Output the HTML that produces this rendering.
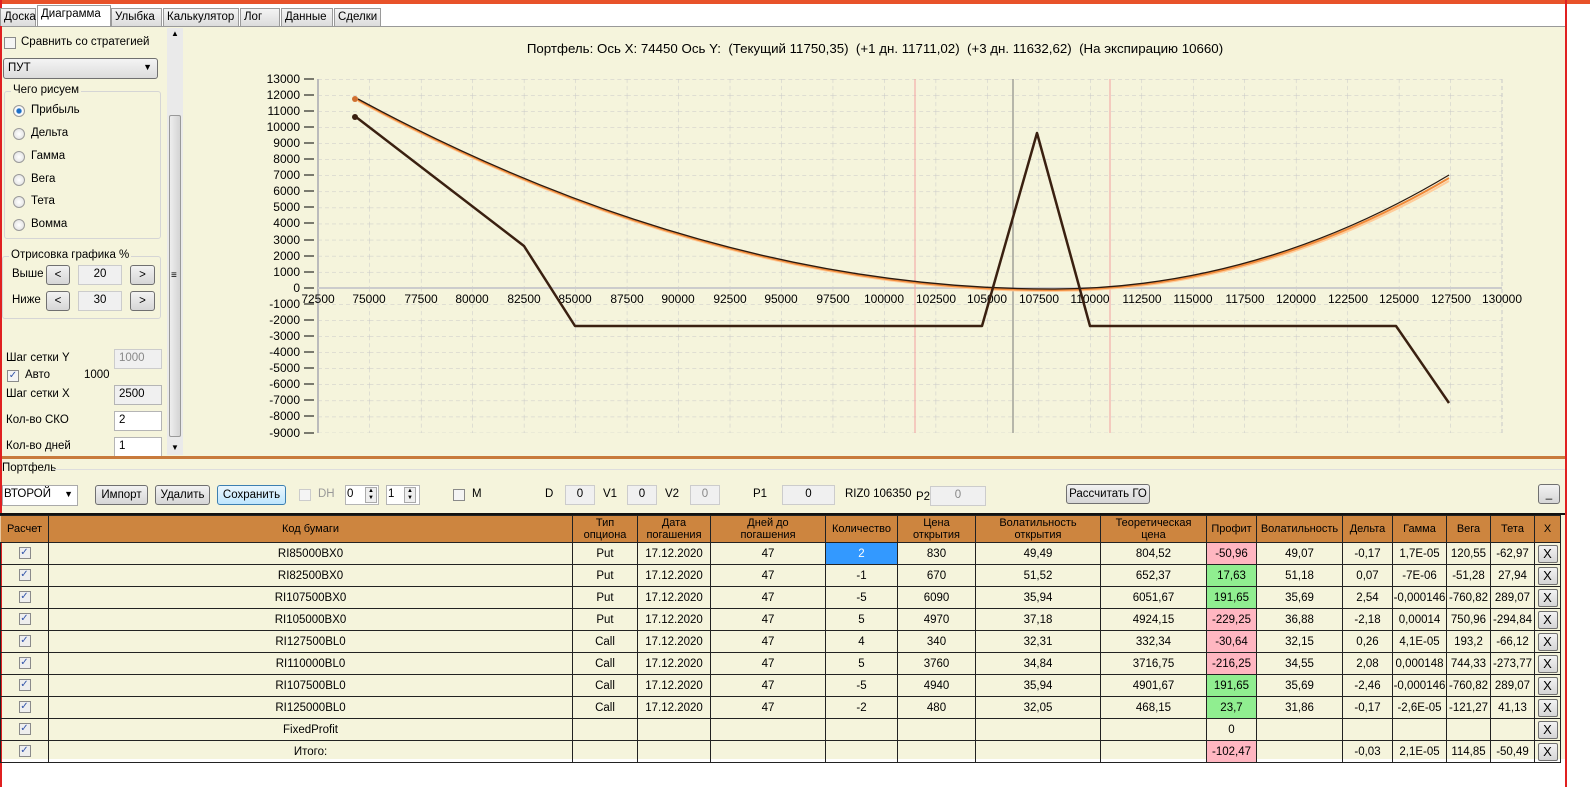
<!DOCTYPE html><html><head><meta charset="utf-8"><style>
*{box-sizing:border-box}
body{margin:0;width:1590px;height:787px;overflow:hidden;background:#fff;font-family:"Liberation Sans",sans-serif;font-size:11.5px;color:#000;position:relative}
.a{position:absolute}
.bg{background:#f5f4dc}
.tab{position:absolute;top:8px;height:18px;border:1px solid #9a9a9a;border-bottom:none;background:linear-gradient(#f4f4f4,#dcdcdc);font-size:11.5px;padding:2px 3px 0}
.btn{position:absolute;height:20px;border:1px solid #707070;border-radius:3px;background:linear-gradient(#f2f2f2,#d6d6d6);font-size:11.5px;text-align:center;line-height:18px}
.inp{position:absolute;height:20px;border:1px solid #b5b5b5;background:#fff;font-size:11.5px;padding:2px 4px}
.dis{background:#f0f0f0;color:#888;border-color:#ccc}
.rad{position:absolute;width:12px;height:12px;border-radius:50%;border:1px solid #9a9a9a;background:radial-gradient(#fff,#ddd)}
.cb{position:absolute;width:12px;height:12px;border:1px solid #8a8a8a;background:#f4f4f4;font-size:10px;line-height:10px;text-align:center;color:#3355aa}
.grp{position:absolute;border:1px solid #d5d5d5;border-radius:3px}
.gl{position:absolute;top:-8px;left:6px;background:#f5f4dc;padding:0 2px}
table{border-collapse:collapse;position:absolute;left:0;top:515px;table-layout:fixed}
td{border:1px solid #222;height:22px;text-align:center;font-size:11.5px;padding:0;white-space:nowrap;overflow:hidden}
th{background:#cd853f;border:1px solid #222;border-left:1px solid #e8c8a0;font-weight:normal;font-size:11px;height:27px;line-height:12px;padding:0}
.r{background:#ffb6c1}.g{background:#90ee90}
.xb{display:inline-block;width:20px;height:18px;border:1px solid #707070;border-radius:2px;background:linear-gradient(#f2f2f2,#d6d6d6);line-height:16px;font-size:13px}
.ck{display:inline-block;width:12px;height:12px;border:1px solid #8a8a8a;background:#eee;font-size:10px;line-height:10px;color:#3355aa;vertical-align:middle}
</style></head><body>
<div class="a" style="left:0;top:0;width:1590px;height:4px;background:#e8522a"></div>
<div class="a" style="left:0;top:4px;width:1590px;height:22px;background:#fff"></div>
<div class="a" style="left:0;top:0;width:2px;height:787px;background:#e02020"></div>
<div class="a" style="left:1565px;top:0;width:2px;height:787px;background:#e02020"></div>
<div class="tab" style="left:0;width:36px">Доска</div>
<div class="tab" style="left:37px;top:5px;height:22px;width:74px;background:#fff">Диаграмма</div>
<div class="tab" style="left:111px;width:51px">Улыбка</div>
<div class="tab" style="left:163px;width:76px">Калькулятор</div>
<div class="tab" style="left:240px;width:40px">Лог</div>
<div class="tab" style="left:281px;width:52px">Данные</div>
<div class="tab" style="left:334px;width:47px">Сделки</div>
<div class="a bg" style="left:2px;top:26px;width:1563px;height:430px;border-top:1px solid #999"></div>
<div class="cb" style="left:4px;top:37px"></div><div class="a" style="left:21px;top:36px">Сравнить со стратегией</div>
<div class="a" style="left:3px;top:58px;width:155px;height:21px;border:1px solid #707070;border-radius:3px;background:linear-gradient(#f4f4f4,#dcdcdc);padding:3px 4px">ПУТ<span style="position:absolute;right:5px;top:3px;font-size:9px">▼</span></div>
<div class="grp" style="left:4px;top:91px;width:157px;height:148px"><span class="gl">Чего рисуем</span></div>
<div class="rad" style="left:13px;top:105px;background:radial-gradient(#1b6fc7 30%,#fff 45%,#ddd)"></div><div class="a" style="left:31px;top:104px">Прибыль</div>
<div class="rad" style="left:13px;top:128px"></div><div class="a" style="left:31px;top:127px">Дельта</div>
<div class="rad" style="left:13px;top:151px"></div><div class="a" style="left:31px;top:150px">Гамма</div>
<div class="rad" style="left:13px;top:174px"></div><div class="a" style="left:31px;top:173px">Вега</div>
<div class="rad" style="left:13px;top:196px"></div><div class="a" style="left:31px;top:195px">Тета</div>
<div class="rad" style="left:13px;top:219px"></div><div class="a" style="left:31px;top:218px">Вомма</div>
<div class="grp" style="left:2px;top:256px;width:159px;height:63px"><span class="gl">Отрисовка графика %</span></div>
<div class="a" style="left:12px;top:268px">Выше</div><div class="btn" style="left:46px;top:265px;width:24px">&lt;</div><div class="inp dis" style="left:78px;top:265px;width:44px;text-align:center;color:#000">20</div><div class="btn" style="left:130px;top:265px;width:25px">&gt;</div>
<div class="a" style="left:12px;top:294px">Ниже</div><div class="btn" style="left:46px;top:291px;width:24px">&lt;</div><div class="inp dis" style="left:78px;top:291px;width:44px;text-align:center;color:#000">30</div><div class="btn" style="left:130px;top:291px;width:25px">&gt;</div>
<div class="a" style="left:6px;top:352px">Шаг сетки Y</div><div class="inp dis" style="left:114px;top:349px;width:48px">1000</div>
<div class="cb" style="left:7px;top:370px">✓</div><div class="a" style="left:25px;top:369px">Авто</div><div class="a" style="left:84px;top:369px">1000</div>
<div class="a" style="left:6px;top:388px">Шаг сетки X</div><div class="inp" style="left:114px;top:385px;width:48px;background:#f0f0f0">2500</div>
<div class="a" style="left:6px;top:414px">Кол-во СКО</div><div class="inp" style="left:114px;top:411px;width:48px">2</div>
<div class="a" style="left:6px;top:440px">Кол-во дней</div><div class="inp" style="left:114px;top:437px;width:48px">1</div>
<div class="a" style="left:167px;top:28px;width:16px;height:427px;background:#eaeaea"></div>
<div class="a" style="left:169px;top:115px;width:12px;height:322px;border:1px solid #999;border-radius:2px;background:linear-gradient(90deg,#eee,#d4d4d4)"></div>
<div class="a" style="left:171px;top:29px;font-size:8px">▲</div><div class="a" style="left:171px;top:443px;font-size:8px">▼</div>
<div class="a" style="left:171px;top:270px;font-size:10px">≡</div>
<div class="a" style="left:184px;top:41px;width:1382px;text-align:center;font-size:13.3px">Портфель: Ось X: 74450 Ось Y:&nbsp; (Текущий 11750,35)&nbsp; (+1 дн. 11711,02)&nbsp; (+3 дн. 11632,62)&nbsp; (На экспирацию 10660)</div>
<svg class="a" style="left:0;top:0" width="1590" height="460" font-family="Liberation Sans" font-size="12">
<defs><pattern id="gp" x="318" y="79" width="51.47" height="16.08" patternUnits="userSpaceOnUse"><path d="M0 0H51.47M0 0V16.08" stroke="#c8c8c8" stroke-dasharray="4 3" fill="none"/></pattern></defs>
<rect x="318" y="79" width="1184" height="354" fill="url(#gp)"/>
<line x1="1502" y1="79" x2="1502" y2="433" stroke="#c8c8c8" stroke-dasharray="4 3"/>
<line x1="318" y1="79" x2="318" y2="433" stroke="#bbb" stroke-width="2"/>
<line x1="318" y1="288" x2="1502" y2="288" stroke="#ccc" stroke-width="2"/>
<line x1="915" y1="79" x2="915" y2="433" stroke="#f4a0a0"/>
<line x1="1110" y1="79" x2="1110" y2="433" stroke="#f4a0a0"/>
<line x1="1013" y1="79" x2="1013" y2="433" stroke="#777"/>
<g text-anchor="end" fill="#000">
<text x="300" y="83">13000</text><text x="300" y="99">12000</text><text x="300" y="115">11000</text><text x="300" y="131">10000</text><text x="300" y="147">9000</text><text x="300" y="163">8000</text><text x="300" y="179">7000</text><text x="300" y="195">6000</text><text x="300" y="211">5000</text><text x="300" y="227">4000</text><text x="300" y="244">3000</text><text x="300" y="260">2000</text><text x="300" y="276">1000</text><text x="300" y="292">0</text><text x="300" y="308">-1000</text><text x="300" y="324">-2000</text><text x="300" y="340">-3000</text><text x="300" y="356">-4000</text><text x="300" y="372">-5000</text><text x="300" y="388">-6000</text><text x="300" y="404">-7000</text><text x="300" y="420">-8000</text><text x="300" y="437">-9000</text>
</g>
<path d="M304 79h10M304 95h10M304 111h10M304 127h10M304 143h10M304 159h10M304 175h10M304 191h10M304 207h10M304 223h10M304 240h10M304 256h10M304 272h10M304 288h10M304 304h10M304 320h10M304 336h10M304 352h10M304 368h10M304 384h10M304 400h10M304 416h10M304 433h10" stroke="#000"/>
<g text-anchor="middle" fill="#000">
<text x="318" y="303">72500</text><text x="369" y="303">75000</text><text x="421" y="303">77500</text><text x="472" y="303">80000</text><text x="524" y="303">82500</text><text x="575" y="303">85000</text><text x="627" y="303">87500</text><text x="678" y="303">90000</text><text x="730" y="303">92500</text><text x="781" y="303">95000</text><text x="833" y="303">97500</text><text x="884" y="303">100000</text><text x="936" y="303">102500</text><text x="987" y="303">105000</text><text x="1039" y="303">107500</text><text x="1090" y="303">110000</text><text x="1142" y="303">112500</text><text x="1193" y="303">115000</text><text x="1245" y="303">117500</text><text x="1296" y="303">120000</text><text x="1348" y="303">122500</text><text x="1399" y="303">125000</text><text x="1451" y="303">127500</text><text x="1502" y="303">130000</text>
</g>
<path d="M358 101 Q712 292 1055 291 Q1260 290 1449 181" stroke="#ffcc99" stroke-width="2" fill="none"/>
<path d="M358 100 Q712 291 1055 290 Q1260 289 1449 178" stroke="#f08a3a" stroke-width="2" fill="none"/>
<path d="M358 99 Q712 290 1055 289 Q1260 288 1449 175" stroke="#2a1a10" stroke-width="1.3" fill="none"/>
<circle cx="355" cy="99" r="3" fill="#d07030"/>
<polyline points="356,117 524,246 575,326 982,326 1037,133 1090,326 1396,326 1449,403" stroke="#3a2010" stroke-width="2.5" fill="none" stroke-linejoin="round"/>
<circle cx="355" cy="117" r="3" fill="#3a2010"/>
</svg>
<div class="a" style="left:2px;top:456px;width:1563px;height:3px;background:#c87a3c"></div>
<div class="a bg" style="left:2px;top:459px;width:1563px;height:300px"></div>
<div class="a" style="left:2px;top:462px">Портфель</div>
<div class="a" style="left:52px;top:469px;width:1513px;height:1px;background:#ddd"></div>
<div class="a" style="left:2px;top:485px;width:76px;height:21px;border:1px solid #aaa;background:#fff;padding:2px 1px">ВТОРОЙ<span style="position:absolute;right:4px;top:3px;font-size:9px">▼</span></div>
<div class="btn" style="left:95px;top:485px;width:53px">Импорт</div>
<div class="btn" style="left:155px;top:485px;width:55px">Удалить</div>
<div class="btn" style="left:217px;top:485px;width:69px;border-color:#3c7fb1;background:linear-gradient(#eaf6fd,#bee6fd)">Сохранить</div>
<div class="cb" style="left:299px;top:489px;border-color:#ccc"></div><div class="a" style="left:318px;top:488px;color:#999">DH</div>
<div class="inp" style="left:345px;top:485px;width:34px;padding:2px 1px">0</div><div class="a" style="left:365px;top:487px;width:12px;height:16px;border:1px solid #aaa;background:#eee;font-size:6px;line-height:7px;text-align:center">▲<br>▼</div>
<div class="inp" style="left:386px;top:485px;width:34px;padding:2px 1px">1</div><div class="a" style="left:404px;top:487px;width:12px;height:16px;border:1px solid #aaa;background:#eee;font-size:6px;line-height:7px;text-align:center">▲<br>▼</div>
<div class="cb" style="left:453px;top:489px"></div><div class="a" style="left:472px;top:488px">M</div>
<div class="a" style="left:545px;top:488px">D</div><div class="inp dis" style="left:565px;top:485px;width:30px;text-align:center;color:#000">0</div>
<div class="a" style="left:603px;top:488px">V1</div><div class="inp dis" style="left:627px;top:485px;width:30px;text-align:center;color:#000">0</div>
<div class="a" style="left:665px;top:488px">V2</div><div class="inp dis" style="left:690px;top:485px;width:30px;text-align:center">0</div>
<div class="a" style="left:753px;top:488px">P1</div><div class="inp dis" style="left:782px;top:485px;width:53px;text-align:center;color:#000">0</div>
<div class="a" style="left:845px;top:488px">RIZ0 106350</div><div class="a" style="left:916px;top:491px">P2</div><div class="inp dis" style="left:930px;top:486px;width:56px;text-align:center">0</div>
<div class="btn" style="left:1066px;top:484px;width:84px">Рассчитать ГО</div>
<div class="btn" style="left:1538px;top:484px;width:22px">_</div>
<div class="a" style="left:0;top:513px;width:1565px;height:2px;background:#111"></div>
<table>
<colgroup><col style="width:48px"><col style="width:524px"><col style="width:65px"><col style="width:73px"><col style="width:115px"><col style="width:72px"><col style="width:78px"><col style="width:125px"><col style="width:106px"><col style="width:50px"><col style="width:86px"><col style="width:50px"><col style="width:54px"><col style="width:44px"><col style="width:44px"><col style="width:26px"></colgroup>
<tr><th>Расчет</th><th>Код бумаги</th><th>Тип<br>опциона</th><th>Дата<br>погашения</th><th>Дней до<br>погашения</th><th>Количество</th><th>Цена<br>открытия</th><th>Волатильность<br>открытия</th><th>Теоретическая<br>цена</th><th>Профит</th><th>Волатильность</th><th>Дельта</th><th>Гамма</th><th>Вега</th><th>Тета</th><th>X</th></tr>
<tr><td><span class="ck">✓</span></td><td>RI85000BX0</td><td>Put</td><td>17.12.2020</td><td>47</td><td style="background:#3399ff;color:#fff">2</td><td>830</td><td>49,49</td><td>804,52</td><td class="r">-50,96</td><td>49,07</td><td>-0,17</td><td>1,7E-05</td><td>120,55</td><td>-62,97</td><td><span class="xb">X</span></td></tr>
<tr><td><span class="ck">✓</span></td><td>RI82500BX0</td><td>Put</td><td>17.12.2020</td><td>47</td><td>-1</td><td>670</td><td>51,52</td><td>652,37</td><td class="g">17,63</td><td>51,18</td><td>0,07</td><td>-7E-06</td><td>-51,28</td><td>27,94</td><td><span class="xb">X</span></td></tr>
<tr><td><span class="ck">✓</span></td><td>RI107500BX0</td><td>Put</td><td>17.12.2020</td><td>47</td><td>-5</td><td>6090</td><td>35,94</td><td>6051,67</td><td class="g">191,65</td><td>35,69</td><td>2,54</td><td>-0,000146</td><td>-760,82</td><td>289,07</td><td><span class="xb">X</span></td></tr>
<tr><td><span class="ck">✓</span></td><td>RI105000BX0</td><td>Put</td><td>17.12.2020</td><td>47</td><td>5</td><td>4970</td><td>37,18</td><td>4924,15</td><td class="r">-229,25</td><td>36,88</td><td>-2,18</td><td>0,00014</td><td>750,96</td><td>-294,84</td><td><span class="xb">X</span></td></tr>
<tr><td><span class="ck">✓</span></td><td>RI127500BL0</td><td>Call</td><td>17.12.2020</td><td>47</td><td>4</td><td>340</td><td>32,31</td><td>332,34</td><td class="r">-30,64</td><td>32,15</td><td>0,26</td><td>4,1E-05</td><td>193,2</td><td>-66,12</td><td><span class="xb">X</span></td></tr>
<tr><td><span class="ck">✓</span></td><td>RI110000BL0</td><td>Call</td><td>17.12.2020</td><td>47</td><td>5</td><td>3760</td><td>34,84</td><td>3716,75</td><td class="r">-216,25</td><td>34,55</td><td>2,08</td><td>0,000148</td><td>744,33</td><td>-273,77</td><td><span class="xb">X</span></td></tr>
<tr><td><span class="ck">✓</span></td><td>RI107500BL0</td><td>Call</td><td>17.12.2020</td><td>47</td><td>-5</td><td>4940</td><td>35,94</td><td>4901,67</td><td class="g">191,65</td><td>35,69</td><td>-2,46</td><td>-0,000146</td><td>-760,82</td><td>289,07</td><td><span class="xb">X</span></td></tr>
<tr><td><span class="ck">✓</span></td><td>RI125000BL0</td><td>Call</td><td>17.12.2020</td><td>47</td><td>-2</td><td>480</td><td>32,05</td><td>468,15</td><td class="g">23,7</td><td>31,86</td><td>-0,17</td><td>-2,6E-05</td><td>-121,27</td><td>41,13</td><td><span class="xb">X</span></td></tr>
<tr><td><span class="ck">✓</span></td><td>FixedProfit</td><td></td><td></td><td></td><td></td><td></td><td></td><td></td><td>0</td><td></td><td></td><td></td><td></td><td></td><td><span class="xb">X</span></td></tr>
<tr><td><span class="ck">✓</span></td><td>Итого:</td><td></td><td></td><td></td><td></td><td></td><td></td><td></td><td class="r">-102,47</td><td></td><td>-0,03</td><td>2,1E-05</td><td>114,85</td><td>-50,49</td><td><span class="xb">X</span></td></tr>
</table>
</body></html>
